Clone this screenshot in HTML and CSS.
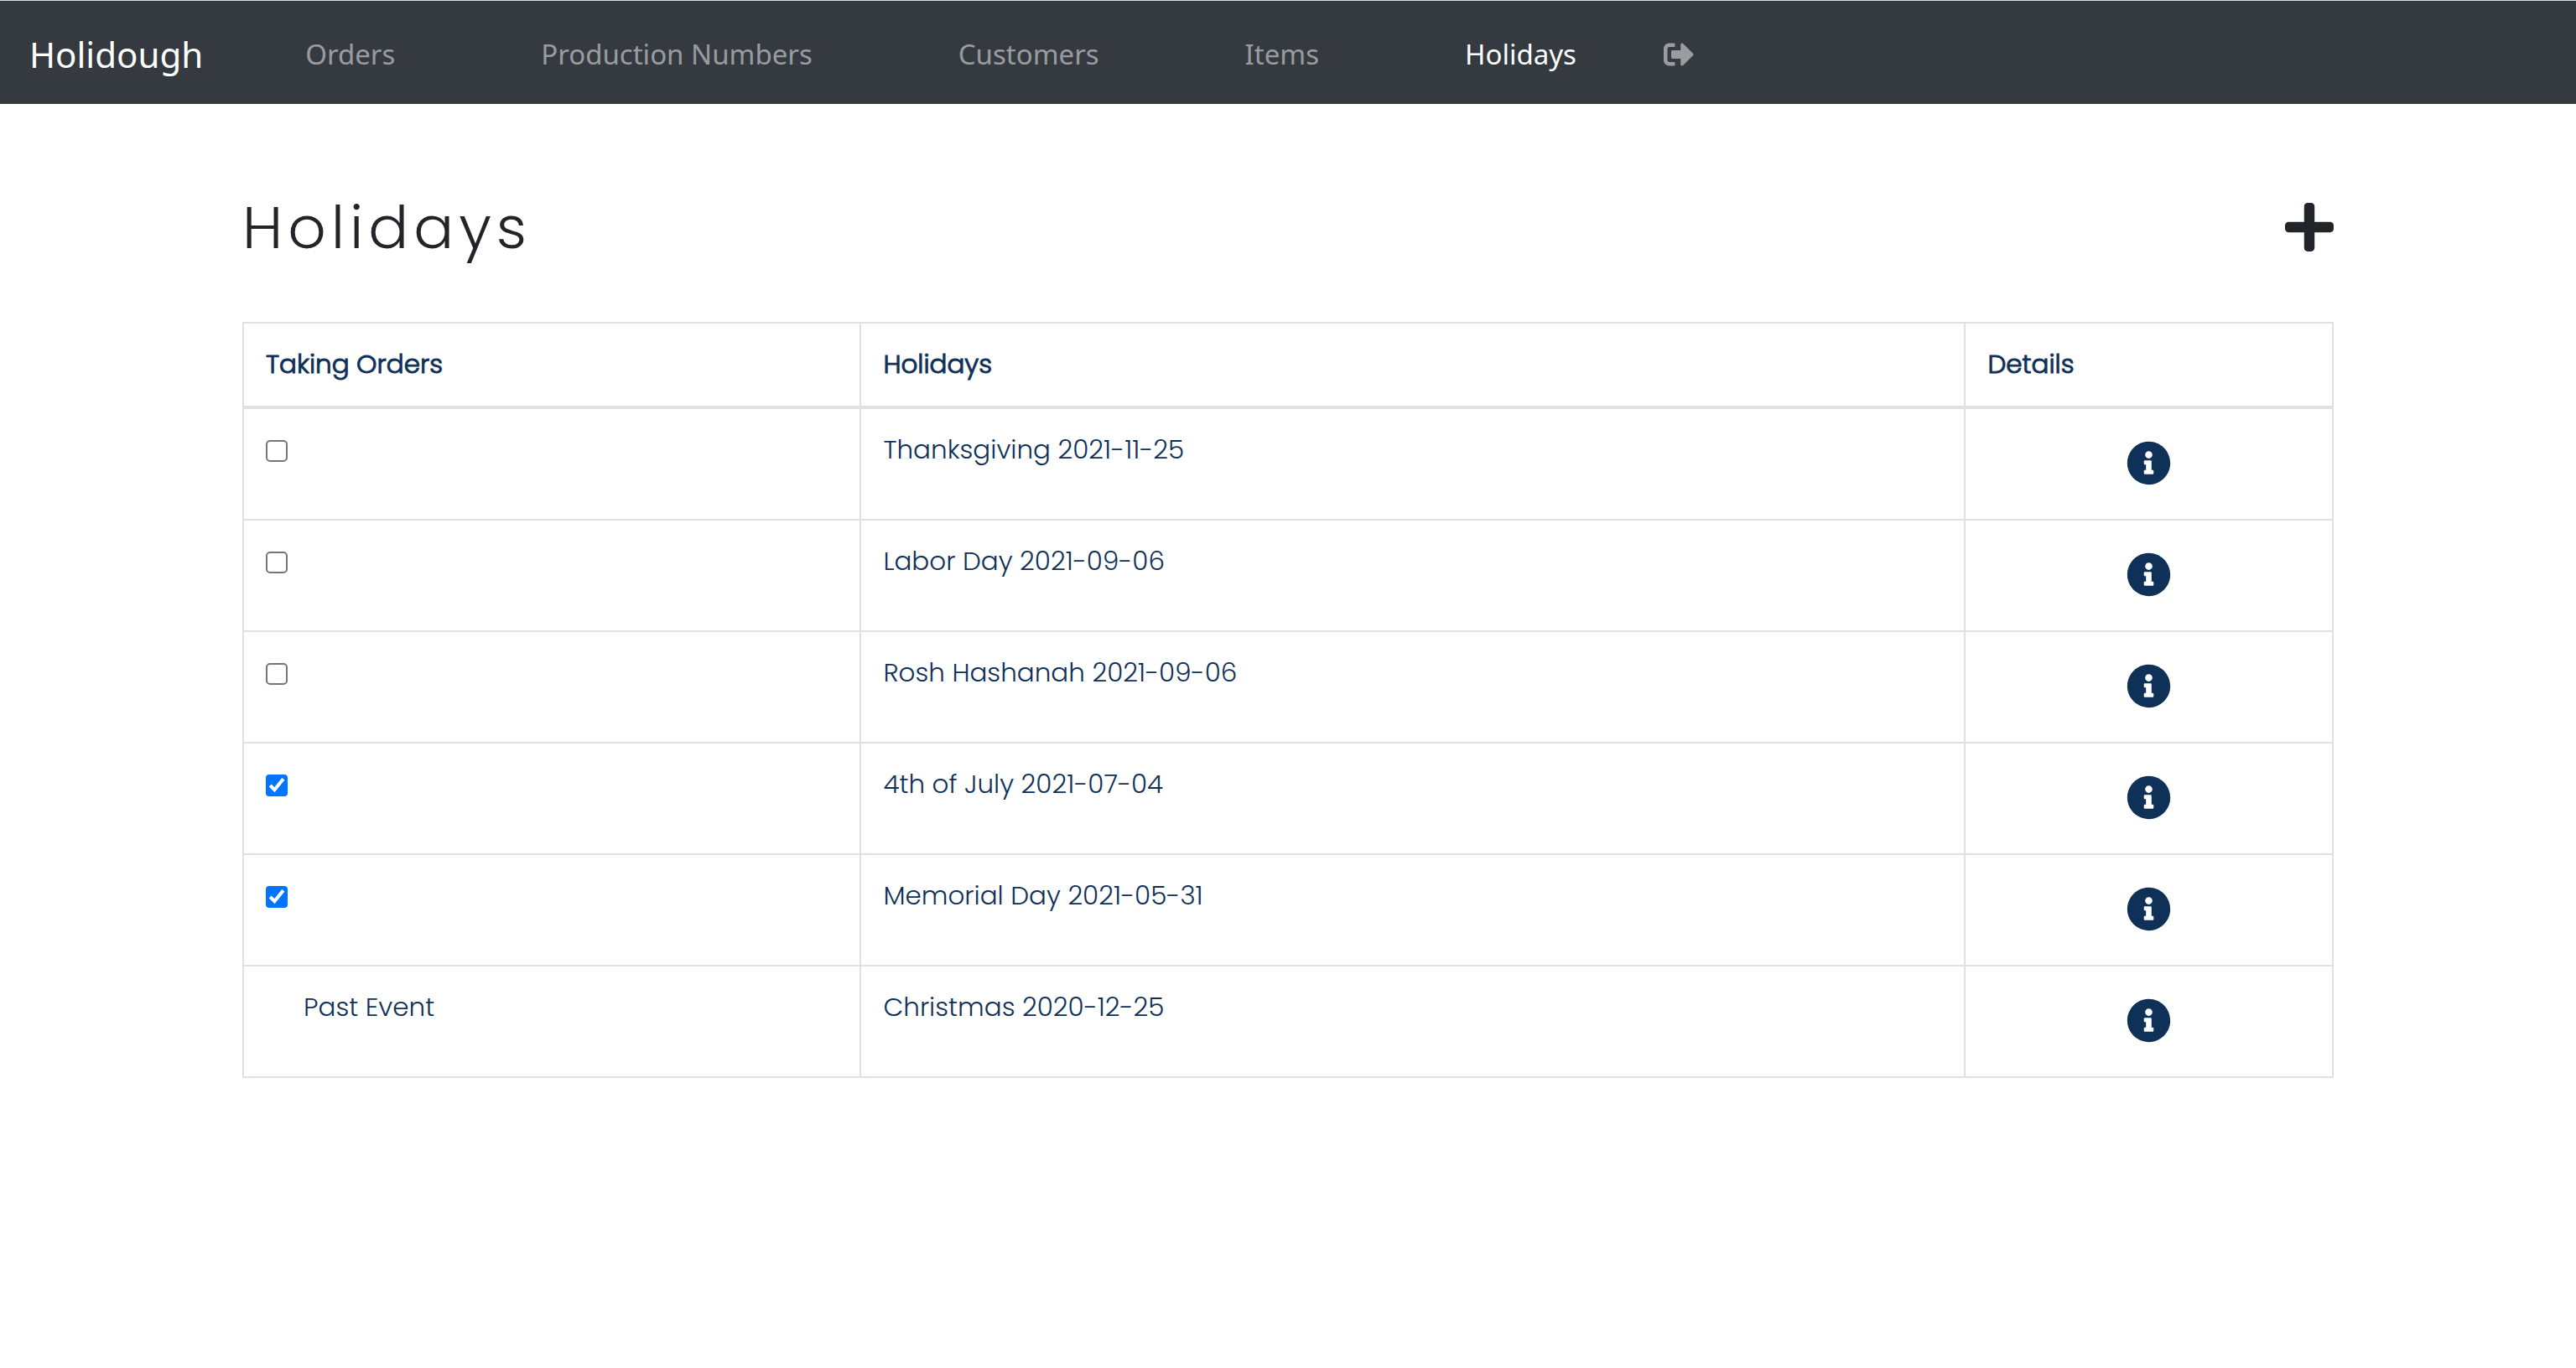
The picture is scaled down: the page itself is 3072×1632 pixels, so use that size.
FILE: index.html
```html
<!DOCTYPE html>
<html lang="en">
<head>
<meta charset="utf-8">
<meta name="viewport" content="width=device-width, initial-scale=1">
<title>Holidough - Holidays</title>
<link rel="stylesheet" href="styles.css">
</head>
<body>
<svg class="sprite" aria-hidden="true">
  <symbol id="info" viewBox="0 0 512 512"><path d="M256 8C119.043 8 8 119.083 8 256c0 136.997 111.043 248 248 248s248-111.003 248-248C504 119.083 392.957 8 256 8zm0 110c23.196 0 42 18.804 42 42s-18.804 42-42 42-42-18.804-42-42 18.804-42 42-42zm56 254c0 6.627-5.373 12-12 12h-88c-6.627 0-12-5.373-12-12v-24c0-6.627 5.373-12 12-12h12v-64h-12c-6.627 0-12-5.373-12-12v-24c0-6.627 5.373-12 12-12h64c6.627 0 12 5.373 12 12v100h12c6.627 0 12 5.373 12 12v24z"/></symbol>
</svg>

<header class="navbar">
  <a class="brand" href="#">Holidough</a>
  <nav class="nav" aria-label="Main">
    <a class="nav-link" href="#">Orders</a>
    <a class="nav-link" href="#">Production Numbers</a>
    <a class="nav-link" href="#">Customers</a>
    <a class="nav-link" href="#">Items</a>
    <a class="nav-link active" href="#" aria-current="page">Holidays</a>
  </nav>
  <a class="sign-out" href="#" aria-label="Sign out">
    <svg viewBox="0 0 512 512" aria-hidden="true"><path d="M497 273L329 441c-15 15-41 4.5-41-17v-96H152c-13.3 0-24-10.7-24-24v-96c0-13.3 10.7-24 24-24h136V88c0-21.4 25.9-32 41-17l168 168c9.3 9.4 9.3 24.6 0 34zM192 436v-40c0-6.6-5.4-12-12-12H96c-17.7 0-32-14.3-32-32V160c0-17.7 14.3-32 32-32h84c6.6 0 12-5.4 12-12V76c0-6.6-5.4-12-12-12H96c-53 0-96 43-96 96v192c0 53 43 96 96 96h84c6.6 0 12-5.4 12-12z"/></svg>
  </a>
</header>

<main class="page">
  <div class="page-head">
    <h1>Holidays</h1>
    <button class="icon-button add" type="button" aria-label="Add holiday">
      <svg viewBox="0 0 448 448" aria-hidden="true"><path d="M416 176H272V32c0-17.67-14.33-32-32-32h-32c-17.67 0-32 14.33-32 32v144H32c-17.67 0-32 14.33-32 32v32c0 17.67 14.33 32 32 32h144v144c0 17.67 14.33 32 32 32h32c17.67 0 32-14.33 32-32V272h144c17.67 0 32-14.33 32-32v-32c0-17.67-14.33-32-32-32z"/></svg>
    </button>
  </div>

  <table class="holidays">
    <thead>
      <tr><th class="col-orders" scope="col">Taking Orders</th><th class="col-name" scope="col">Holidays</th><th scope="col">Details</th></tr>
    </thead>
    <tbody>
      <tr>
        <td><input type="checkbox" id="h1" aria-labelledby="n1"></td>
        <td><label id="n1" for="h1">Thanksgiving 2021-11-25</label></td>
        <td><button class="icon-button info" type="button" aria-label="Details for Thanksgiving"><svg><use href="#info"/></svg></button></td>
      </tr>
      <tr>
        <td><input type="checkbox" id="h2" aria-labelledby="n2"></td>
        <td><label id="n2" for="h2">Labor Day 2021-09-06</label></td>
        <td><button class="icon-button info" type="button" aria-label="Details for Labor Day"><svg><use href="#info"/></svg></button></td>
      </tr>
      <tr>
        <td><input type="checkbox" id="h3" aria-labelledby="n3"></td>
        <td><label id="n3" for="h3">Rosh Hashanah 2021-09-06</label></td>
        <td><button class="icon-button info" type="button" aria-label="Details for Rosh Hashanah"><svg><use href="#info"/></svg></button></td>
      </tr>
      <tr>
        <td><input type="checkbox" id="h4" aria-labelledby="n4" checked></td>
        <td><label id="n4" for="h4">4th of July 2021-07-04</label></td>
        <td><button class="icon-button info" type="button" aria-label="Details for 4th of July"><svg><use href="#info"/></svg></button></td>
      </tr>
      <tr>
        <td><input type="checkbox" id="h5" aria-labelledby="n5" checked></td>
        <td><label id="n5" for="h5">Memorial Day 2021-05-31</label></td>
        <td><button class="icon-button info" type="button" aria-label="Details for Memorial Day"><svg><use href="#info"/></svg></button></td>
      </tr>
      <tr>
        <td><span class="past">Past Event</span></td>
        <td>Christmas 2020-12-25</td>
        <td><button class="icon-button info" type="button" aria-label="Details for Christmas"><svg><use href="#info"/></svg></button></td>
      </tr>
    </tbody>
  </table>
</main>
</body>
</html>
```
FILE: styles.css
```css
:root {
  --ink: #212529;
  --navy: #0f3057;
  --line: #dee2e6;
  --bar: #343a40;
}

* { box-sizing: border-box; }

body {
  margin: 0;
  background: #fff;
  color: var(--ink);
  font-family: Poppins, "Open Sans", sans-serif;
  font-weight: 300;
}

.sprite { display: none; }

/* Navigation bar */
.navbar {
  display: flex;
  align-items: center;
  min-height: 124px;
  padding: 4px 35px 0;
  border-top: 1px solid #d5dddf;
  background: var(--bar);
  font-family: "Noto Sans", sans-serif;
  font-weight: 400;
}

.brand {
  color: #fff;
  font-size: 42px;
  line-height: 54px;
  text-decoration: none;
}

.nav {
  display: flex;
  gap: 174px;
  margin-left: 122px;
}

.nav-link {
  color: rgba(255, 255, 255, 0.5);
  font-size: 33px;
  line-height: 54px;
  text-decoration: none;
}

.nav-link.active { color: #fff; }

.sign-out {
  display: flex;
  margin-left: 104px;
  color: rgba(255, 255, 255, 0.5);
}

.sign-out svg {
  width: 36px;
  height: 36px;
  fill: currentColor;
}

/* Page content */
.page { padding: 84px 289px; }

.page-head {
  display: flex;
  align-items: center;
  justify-content: space-between;
  margin-bottom: 50px;
}

h1 {
  margin: 0;
  font-size: 71px;
  font-weight: 300;
  line-height: 126px;
  letter-spacing: 6px;
}

.icon-button {
  display: flex;
  padding: 0;
  border: 0;
  background: none;
  color: inherit;
  cursor: pointer;
}

.icon-button svg { fill: currentColor; }

.add svg {
  width: 58px;
  height: 58px;
}

/* Holiday table */
.holidays {
  width: 100%;
  table-layout: fixed;
  border-collapse: collapse;
  color: var(--navy);
  font-size: 31px;
  line-height: 42px;
}

.col-orders { width: 29.55%; }
.col-name { width: 52.85%; }

.holidays th,
.holidays td {
  padding: 27px 26px;
  border: 2px solid var(--line);
  text-align: left;
  vertical-align: top;
}

.holidays th {
  padding-bottom: 29px;
  border-bottom-width: 4px;
  font-weight: 300;
  -webkit-text-stroke: 1px var(--navy);
}

.holidays input {
  display: block;
  zoom: 2;
  width: 13px;
  height: 13px;
  margin: 5px 0 0;
}

.past { padding-left: 45px; }

.info {
  margin: 11px auto 13px;
}

.info svg {
  width: 53px;
  height: 53px;
}
```
